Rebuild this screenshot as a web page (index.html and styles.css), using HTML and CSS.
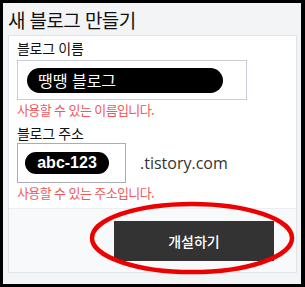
FILE: index.html
```html
<!DOCTYPE html>
<html lang="ko">
<head>
    <meta charset="UTF-8">
    <title>새 블로그 만들기</title>
    <link rel="stylesheet" href="styles.css">
</head>
<body>
    <div class="frame">
        <h1 class="title">새 블로그 만들기</h1>
        <div class="card">
            <div class="card-body">
                <div class="field">
                    <label class="field-label">블로그 이름</label>
                    <div class="input-box name-box">
                        <span class="pill name-pill">땡땡 블로그</span>
                    </div>
                    <p class="hint">사용할 수 있는 이름입니다.</p>
                </div>
                <div class="field">
                    <label class="field-label">블로그 주소</label>
                    <div class="address-row">
                        <div class="input-box addr-box">
                            <span class="pill addr-pill">abc-123</span>
                        </div>
                        <span class="domain">.tistory.com</span>
                    </div>
                    <p class="hint">사용할 수 있는 주소입니다.</p>
                </div>
            </div>
            <div class="card-footer">
                <button class="submit-btn" type="button">개설하기</button>
            </div>
        </div>
        <svg class="circle-mark" width="210" height="78" viewBox="0 0 210 78">
            <ellipse cx="105" cy="39" rx="100" ry="34" fill="none" stroke="#ee0000" stroke-width="4.5"/>
        </svg>
    </div>
</body>
</html>
```

FILE: styles.css
```css
* {
    box-sizing: border-box;
}
body {
    margin: 0;
    background-color: #000;
    font-family: "Noto Sans CJK KR", "Noto Sans", sans-serif;
}
.frame {
    position: relative;
    margin: 3px 4px 3px 3px;
    height: 281px;
    background-color: #f3f4f6;
    padding: 0 0 0 5px;
    overflow: hidden;
}
.title {
    margin: 0;
    padding-top: 3px;
    height: 32px;
    font-size: 19px;
    font-weight: 400;
    line-height: 28px;
    letter-spacing: -0.6px;
    color: #111;
}
.card {
    width: 289px;
    border: 1px solid #dfe3ea;
    background-color: #f8f9fb;
}
.card-body {
    background-color: #fff;
    padding: 3px 8px 7px;
    border-bottom: 1px solid #eceef2;
}
.field-label {
    display: block;
    font-size: 14px;
    line-height: 18px;
    letter-spacing: -0.3px;
    color: #111;
    margin-bottom: 3px;
}
.field + .field .field-label {
    margin-bottom: 1px;
}
.input-box {
    display: flex;
    align-items: center;
    height: 40px;
    border: 1px solid #c9ced6;
    background-color: #fff;
}
.name-box {
    width: 230px;
    padding-left: 9px;
}
.addr-box {
    width: 109px;
    padding-left: 7px;
    border-color: #a9acb1;
}
.pill {
    display: inline-flex;
    align-items: center;
    background-color: #000;
    color: #fff;
    border-radius: 13px;
}
.name-pill {
    width: 196px;
    height: 25px;
    padding-left: 11px;
    font-size: 16px;
}
.addr-pill {
    width: 84px;
    height: 22px;
    justify-content: center;
    border-radius: 11px;
    font-family: "Liberation Sans", Arial, sans-serif;
    font-weight: 700;
    font-size: 16px;
}
.address-row {
    display: flex;
    align-items: center;
    gap: 14px;
}
.domain {
    font-family: "Open Sans", sans-serif;
    font-size: 16px;
    color: #333;
}
.hint {
    margin: 1px 0 6px;
    font-size: 13px;
    line-height: 17px;
    letter-spacing: -0.6px;
    color: #f2585b;
}
.field:last-child .hint {
    margin-bottom: 0;
}
.card-footer {
    display: flex;
    justify-content: flex-end;
    padding: 12px 22px 11px 0;
}
.submit-btn {
    width: 160px;
    height: 40px;
    border: none;
    background-color: #333;
    color: #fff;
    font-family: inherit;
    font-size: 14px;
    font-weight: 500;
}
.circle-mark {
    position: absolute;
    left: 84px;
    top: 196px;
}
```
